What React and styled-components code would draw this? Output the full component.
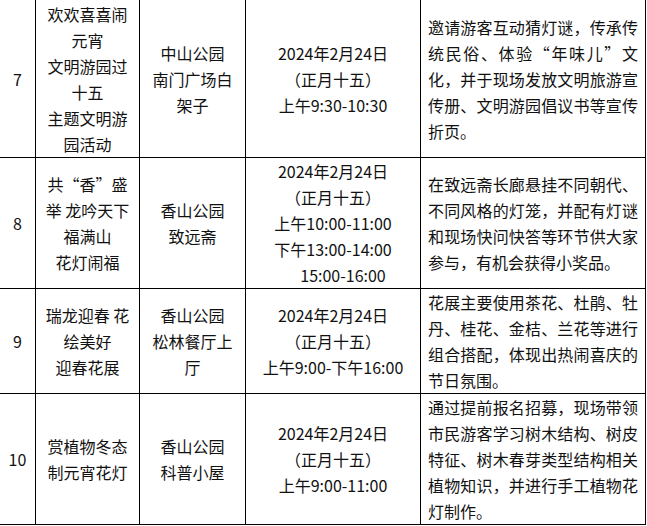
import React from "react";
import styled, { createGlobalStyle } from "styled-components";

const Global = createGlobalStyle`
  html, body {
    margin: 0;
    padding: 0;
    background: #ffffff;
  }
  body {
    font-family: "Noto Sans CJK SC", "Noto Sans", sans-serif;
    color: #111111;
    overflow: hidden;
  }
`;

const Sheet = styled.div`
  display: grid;
  grid-template-columns: 36px 104px 106px 175px 225px;
  width: 647px;
  box-sizing: border-box;
  margin: -1px 0 0 -1px;
  border-left: 1px solid #000;
  border-top: 1px solid #000;
  font-size: 16px;
  line-height: 26px;
`;

const Cell = styled.div`
  box-sizing: border-box;
  border-right: 1px solid #000;
  border-bottom: 1px solid #000;
  display: flex;
  flex-direction: column;
  justify-content: center;
  align-items: ${(p) => (p.$text ? "stretch" : "center")};
  text-align: ${(p) => (p.$text ? "justify" : "center")};
  padding: ${(p) => (p.$text ? "0 7px 0 7px" : p.$narrow ? "0 0" : "0 6px")};
  min-height: ${(p) => p.$min || 0}px;
`;

const Line = styled.span`
  display: block;
  padding-left: ${(p) => p.$indent || 0}px;
`;

const rows = [
  {
    no: "7",
    title: ["欢欢喜喜闹元宵", "文明游园过十五", "主题文明游园活动"],
    place: ["中山公园", "南门广场白架子"],
    time: [["2024年2月24日"], ["（正月十五）"], ["上午9:30-10:30"]],
    desc: "邀请游客互动猜灯谜，传承传统民俗、体验“年味儿”文化，并于现场发放文明旅游宣传册、文明游园倡议书等宣传折页。",
    min: 158,
  },
  {
    no: "8",
    title: ["共“香”盛举 龙吟天下", "福满山", "花灯闹福"],
    place: ["香山公园", "致远斋"],
    time: [
      ["2024年2月24日"],
      ["（正月十五）"],
      ["上午10:00-11:00"],
      ["下午13:00-14:00"],
      ["15:00-16:00", 20],
    ],
    desc: "在致远斋长廊悬挂不同朝代、不同风格的灯笼，并配有灯谜和现场快问快答等环节供大家参与，有机会获得小奖品。",
  },
  {
    no: "9",
    title: ["瑞龙迎春 花绘美好", "迎春花展"],
    place: ["香山公园", "松林餐厅上厅"],
    time: [["2024年2月24日"], ["（正月十五）"], ["上午9:00-下午16:00"]],
    desc: "花展主要使用茶花、杜鹃、牡丹、桂花、金桔、兰花等进行组合搭配，体现出热闹喜庆的节日氛围。",
  },
  {
    no: "10",
    title: ["赏植物冬态制元宵花灯"],
    place: ["香山公园", "科普小屋"],
    time: [["2024年2月24日"], ["（正月十五）"], ["上午9:00-11:00"]],
    desc: "通过提前报名招募，现场带领市民游客学习树木结构、树皮特征、树木春芽类型结构相关植物知识，并进行手工植物花灯制作。",
  },
];

export default function App() {
  return (
    <>
      <Global />
      <Sheet>
        {rows.map((r) => (
          <React.Fragment key={r.no}>
            <Cell $narrow $min={r.min}>{r.no}</Cell>
            <Cell $min={r.min}>
              {r.title.map((t) => (
                <Line key={t}>{t}</Line>
              ))}
            </Cell>
            <Cell $min={r.min}>
              {r.place.map((t) => (
                <Line key={t}>{t}</Line>
              ))}
            </Cell>
            <Cell $min={r.min}>
              {r.time.map(([t, ind]) => (
                <Line key={t} $indent={ind}>
                  {t}
                </Line>
              ))}
            </Cell>
            <Cell $text $min={r.min}>{r.desc}</Cell>
          </React.Fragment>
        ))}
      </Sheet>
    </>
  );
}
